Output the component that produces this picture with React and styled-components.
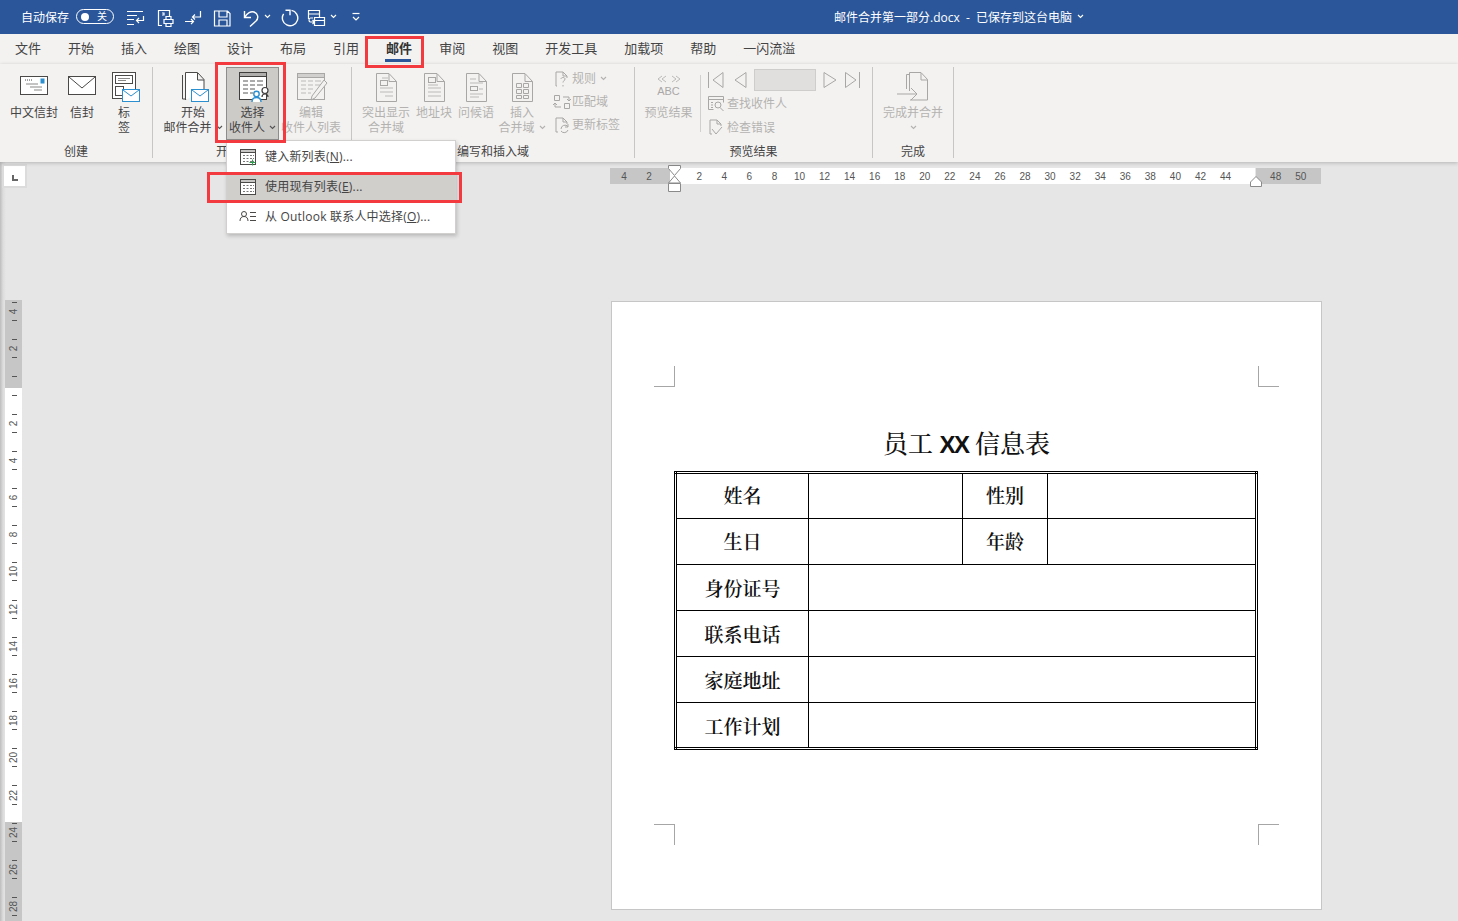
import React from 'react';
import styled, { createGlobalStyle } from 'styled-components';

const GlobalStyle = createGlobalStyle`
  html, body {
    margin: 0;
    padding: 0;
    background: #e6e6e6;
  }
  * {
    box-sizing: border-box;
  }
`;

const FONT = '"Open Sans", "Noto Sans CJK SC", "Liberation Sans", sans-serif';
const BLUE = '#2b579a';
const DIM = '#b4b2b0';
const ICON_DIM = '#a9a7a5';
const ICON_DARK = '#4a4948';
const MAIL = '#2b8fd0';

const Shell = styled.div`
  position: relative;
  width: 1458px;
  height: 921px;
  overflow: hidden;
  font-family: ${FONT};
  background: #e6e6e6;
`;

const TitleBar = styled.header`
  display: flex;
  align-items: center;
  height: 34px;
  padding: 0 0 1px 21px;
  background: ${BLUE};
  color: #fff;
  font-size: 12px;
  white-space: nowrap;
`;

const QuickArea = styled.div`
  display: flex;
  align-items: center;
  width: 813px;
`;

const Toggle = styled.div`
  display: flex;
  align-items: center;
  justify-content: space-between;
  width: 38px;
  height: 15px;
  margin: 0 9px 0 7px;
  padding: 0 6px 0 4px;
  border: 1px solid #fff;
  border-radius: 8px;
  font-size: 10px;
  line-height: 13px;
`;

const ToggleDot = styled.span`
  width: 8px;
  height: 8px;
  border-radius: 50%;
  background: #fff;
`;

const QuickButton = styled.span`
  display: flex;
  align-items: center;
  margin-left: ${p => p.$gap}px;
`;

const DocTitle = styled.div`
  display: flex;
  align-items: center;
  gap: 5px;
`;

const Tabs = styled.nav`
  display: flex;
  gap: 27px;
  height: 30px;
  padding-left: 15px;
  background: #f3f2f1;
  color: #444;
  font-size: 13px;
  line-height: 29px;
`;

const Tab = styled.span`
  position: relative;
  font-weight: ${p => (p.$active ? 700 : 400)};
  color: ${p => (p.$active ? '#333' : '#444')};

  &::after {
    content: '';
    display: ${p => (p.$active ? 'block' : 'none')};
    position: absolute;
    left: -1px;
    right: 1px;
    top: 25px;
    height: 3px;
    background: ${BLUE};
  }
`;

const Ribbon = styled.section`
  position: relative;
  z-index: 2;
  display: flex;
  height: 98px;
  padding: 3px 0 4px;
  background: #f3f2f1;
  box-shadow: 0 1px 4px rgba(0, 0, 0, 0.22);
  font-size: 12px;
  line-height: 15px;
  color: #444;
  white-space: nowrap;
`;

const Group = styled.div`
  display: flex;
  flex-direction: column;
  width: ${p => p.$width}px;
  border-right: 1px solid #c8c6c4;
`;

const GroupBody = styled.div`
  display: flex;
  height: 77px;
  padding-left: ${p => p.$pad || 0}px;
`;

const GroupLabel = styled.div`
  text-align: center;
  height: 14px;
  color: #444;
`;

const LargeButton = styled.div`
  position: relative;
  display: flex;
  flex-direction: column;
  align-items: center;
  flex: none;
  width: ${p => p.$width}px;
  height: 73px;
  color: ${p => (p.$off ? DIM : '#444')};
  background: ${p => (p.$open ? '#cdcbc8' : 'transparent')};
  border: ${p => (p.$open ? '1px solid #8f8d8b' : '0 none')};
  padding-top: ${p => (p.$open ? 1 : 2)}px;
`;

const IconSlot = styled.div`
  display: flex;
  justify-content: center;
  height: 34px;
  margin-bottom: 2px;
`;

const Line = styled.div`
  display: flex;
  align-items: center;
  gap: 4px;
  height: 15px;
`;

const SmallColumn = styled.div`
  display: flex;
  flex-direction: column;
  margin-left: ${p => p.$gap || 0}px;
`;

const SmallRow = styled.div`
  display: flex;
  align-items: center;
  gap: ${p => (p.$tight ? 1 : 2)}px;
  height: ${p => p.$height || 23}px;
  color: ${DIM};
`;

const ThinRule = styled.div`
  width: 1px;
  height: 57px;
  margin-top: 8px;
  background: #d2d0ce;
`;

const NavColumn = styled.div`
  display: flex;
  flex-direction: column;
  padding: 1px 0 0 6px;
`;

const NavRow = styled.div`
  display: flex;
  align-items: center;
  gap: 6px;
  height: 23px;
`;

const RecordBox = styled.div`
  width: 62px;
  height: 22px;
  background: #e1dfdd;
  border: 1px solid #cfcdcb;
`;

const Menu = styled.div`
  position: absolute;
  z-index: 5;
  top: 72px;
  left: -1px;
  width: 230px;
  padding: 1px 0;
  background: #fff;
  border: 1px solid #d2d0ce;
  box-shadow: 1px 2px 4px rgba(0, 0, 0, 0.2);
  color: #444;
  letter-spacing: 0.2px;
`;

const MenuItem = styled.div`
  display: flex;
  align-items: center;
  gap: 8px;
  height: 30px;
  padding: 0 0 1px 12px;
  background: ${p => (p.$hover ? '#d0cfcc' : 'transparent')};
`;

const Mnemonic = styled.span`
  text-decoration: underline;
`;

const Annotation = styled.div`
  position: absolute;
  z-index: 8;
  left: ${p => p.$x}px;
  top: ${p => p.$y}px;
  width: ${p => p.$w}px;
  height: ${p => p.$h}px;
  border: 3px solid #f33b3f;
  pointer-events: none;
`;

const Workspace = styled.main`
  height: 759px;
  padding-top: 4px;
  background: linear-gradient(to right, #bdbdbd 0, #dcdcdc 3px, #e6e6e6 6px);
`;

const RulerRow = styled.div`
  display: flex;
  height: 20px;
`;

const CornerTab = styled.div`
  flex: none;
  display: flex;
  align-items: center;
  justify-content: center;
  width: 21px;
  height: 20px;
  margin-left: 4px;
  background: #fff;
  box-shadow: 0 0 0 2px #dcdcdc;
`;

const CornerGlyph = styled.span`
  width: 6px;
  height: 6px;
  margin: 3px 0 0 0;
  border-left: 2px solid #666;
  border-bottom: 2px solid #666;
`;

const HRuler = styled.div`
  position: relative;
  display: flex;
  width: 711px;
  height: 16px;
  margin: 2px 0 0 585px;
  padding-left: 1.5px;
  background: linear-gradient(
    to right,
    #c6c6c6 60px,
    #fff 60px,
    #fff 645px,
    #e6e6e6 645px,
    #e6e6e6 646px,
    #c6c6c6 646px
  );
`;

const HTick = styled.span`
  flex: none;
  width: 25.07px;
  text-align: center;
  font-family: "Liberation Sans Narrow", "Liberation Sans", sans-serif;
  font-size: 10px;
  line-height: 17px;
  color: #555;
`;

const Marker = styled.svg`
  position: absolute;
  left: ${p => p.$x}px;
  top: ${p => p.$y}px;
`;

const MainRow = styled.div`
  display: flex;
  align-items: flex-start;
`;

const VRuler = styled.div`
  flex: none;
  width: 17px;
  height: 621px;
  margin: 114px 0 0 5px;
  overflow: hidden;
  background: linear-gradient(
    to bottom,
    #c6c6c6 88px,
    #fff 88px,
    #fff 522px,
    #c6c6c6 522px
  );
`;

const VCell = styled.div`
  display: flex;
  align-items: center;
  justify-content: center;
  height: 37.2px;
  margin-left: 1px;
  font-family: "Liberation Sans Narrow", "Liberation Sans", sans-serif;
  font-size: 10px;
  color: #555;
  background:
    linear-gradient(#555, #555) center 25% / 5px 1px no-repeat,
    linear-gradient(#555, #555) center 75% / 5px 1px no-repeat;

  &:first-child {
    margin-top: -7px;
  }
`;

const VLabel = styled.span`
  display: block;
  transform: rotate(-90deg);
`;

const Page = styled.article`
  flex: none;
  width: 711px;
  height: 609px;
  margin: 115px 0 0 589px;
  padding: 64px 42px 0;
  background: #fff;
  border: 1px solid #c6c6c6;
`;

const CropRow = styled.div`
  display: flex;
  justify-content: space-between;
  height: 21px;
`;

const CropMark = styled.span`
  width: 21px;
  height: 21px;
  border-style: solid;
  border-color: #a6a6a6;
  border-width: 0;
  border-top-width: ${p => (p.$v === 'bottom' ? 1 : 0)}px;
  border-bottom-width: ${p => (p.$v === 'top' ? 1 : 0)}px;
  border-left-width: ${p => (p.$h === 'right' ? 1 : 0)}px;
  border-right-width: ${p => (p.$h === 'left' ? 1 : 0)}px;
`;

const DocHeading = styled.h1`
  margin: 39px 0 13px;
  height: 32px;
  font-family: "Noto Serif CJK SC", "Noto Sans CJK SC", serif;
  font-size: 25px;
  line-height: 32px;
  font-weight: 500;
  text-align: center;
  color: #111;
`;

const HeadingLatin = styled.b`
  font-family: "Liberation Sans", sans-serif;
  font-size: 24px;
  letter-spacing: -1.5px;
  font-weight: 700;
`;

const InfoTable = styled.table`
  width: 584px;
  height: 277px;
  margin: 0 0 74px 20px;
  table-layout: fixed;
  border-collapse: collapse;
  border: 3px double #000;

  td {
    height: 46px;
    padding: 0;
    border: 1px solid #000;
    font-family: "Noto Serif CJK SC", "Noto Sans CJK SC", serif;
    font-size: 19px;
    font-weight: 600;
    text-align: center;
    color: #111;
  }

  tr:nth-child(-n + 2) td {
    padding-bottom: 3px;
  }
`;

const ChevronDown = ({ color = '#555', size = 7 }) => (
  <svg width={size} height="5" viewBox="0 0 7 5" fill="none" stroke={color} strokeWidth="1.1">
    <path d="M1 1l2.5 2.5L6 1" />
  </svg>
);

const QatSvg = ({ children, width = 20 }) => (
  <svg width={width} height="20" viewBox={`0 0 ${width} 20`} fill="none" stroke="#fff" strokeWidth="1.2">
    {children}
  </svg>
);

const Box36 = ({ children }) => (
  <svg width="36" height="34" viewBox="0 0 36 34" fill="none" strokeWidth="1">
    {children}
  </svg>
);

const MailBadge = ({ x, y, w = 18, h = 13 }) => (
  <g>
    <rect x={x + 0.5} y={y + 0.5} width={w - 1} height={h - 1} fill="#fff" stroke={MAIL} />
    <path d={`M${x + 1} ${y + 1}l${w / 2 - 1} ${h / 2 - 0.5}l${w / 2 - 1} ${-h / 2 + 0.5}`} stroke={MAIL} />
  </g>
);

const IconCnEnvelope = () => (
  <Box36>
    <rect x="4.5" y="7.5" width="27" height="18" fill="#fff" stroke={ICON_DARK} />
    <path d="M9 11h1M11 11h1M13 11h1M15 11h1" stroke={ICON_DARK} />
    <path d="M10 15h12M14 18h12M18 21h8" stroke="#8a8988" />
    <rect x="24.5" y="9.5" width="4" height="5" fill={MAIL} />
  </Box36>
);

const IconEnvelope = () => (
  <Box36>
    <rect x="4.5" y="7.5" width="27" height="18" fill="#fff" stroke={ICON_DARK} />
    <path d="M5 8l13 11L31 8" stroke={ICON_DARK} />
  </Box36>
);

const IconLabels = () => (
  <Box36>
    <rect x="6.5" y="3.5" width="23" height="26" fill="#fff" stroke={ICON_DARK} />
    <rect x="9.5" y="6.5" width="17" height="8" stroke={ICON_DARK} />
    <path d="M12 9.5h12M12 11.5h8" stroke="#8a8988" />
    <rect x="9.5" y="17.5" width="8" height="9" stroke={ICON_DARK} />
    <MailBadge x={16} y={20} />
  </Box36>
);

const IconStartMerge = () => (
  <Box36>
    <path d="M7.5 6v24h4" stroke={ICON_DARK} />
    <path d="M10.5 31V3.5h12l6.5 7V21M22.5 4v7h6.5" fill="#fff" stroke={ICON_DARK} />
    <MailBadge x={16} y={20} />
  </Box36>
);

const TableLines = ({ color }) => (
  <path d="M8 12h5M15 12h5M22 12h6M8 16h5M15 16h5M22 16h6M8 20h5M15 20h5M8 24h5M15 24h3" stroke={color} />
);

const IconSelect = () => (
  <Box36>
    <rect x="4.5" y="3.5" width="27" height="27" fill="#fff" stroke="#3f3e3d" />
    <rect x="4.5" y="3.5" width="27" height="4" fill="#b0aeac" stroke="#3f3e3d" />
    <TableLines color="#5a5958" />
    <circle cx="21.5" cy="25" r="2.7" fill="#fff" stroke={MAIL} strokeWidth="1.4" />
    <path d="M17 33c0-3 1.500-4.500 4.500-4.500s4.500 1.500 4.500 4.500" fill="#fff" stroke={MAIL} strokeWidth="1.4" />
    <circle cx="30" cy="21.5" r="3" fill="#fff" stroke="#3f3e3d" strokeWidth="1.2" />
    <path d="M27 28c0-2 1-3 3-3s3 1 3 3" stroke="#3f3e3d" strokeWidth="1.2" />
  </Box36>
);

const IconEdit = () => (
  <Box36>
    <rect x="4.5" y="4.5" width="27" height="26" stroke={ICON_DIM} />
    <rect x="4.5" y="4.5" width="27" height="4" fill="#d2d0ce" stroke={ICON_DIM} />
    <TableLines color="#bcbab8" />
    <path d="M31 11l3 3-12 15-4 2 1-4z" fill="#f3f2f1" stroke={ICON_DIM} />
  </Box36>
);

const PageOutline = () => (
  <path d="M8.5 32.500V4.500H21l7.500 8V32.500zM21 5v7.500h7.500" fill="#f3f2f1" stroke={ICON_DIM} />
);

const IconHighlight = () => (
  <Box36>
    <PageOutline />
    <rect x="12.5" y="11.5" width="7" height="5" stroke={ICON_DIM} />
    <path d="M14 9h6M12 19h13M12 23h13M17 27h8" stroke="#bcbab8" />
  </Box36>
);

const IconAddress = () => (
  <Box36>
    <PageOutline />
    <rect x="12.5" y="8.500" width="7" height="5" stroke={ICON_DIM} />
    <path d="M12 16h10M12 19h13M12 23h13M12 27h13" stroke="#bcbab8" />
  </Box36>
);

const IconGreeting = () => (
  <Box36>
    <PageOutline />
    <path d="M12 10h6M12 14h13" stroke="#bcbab8" />
    <rect x="12.5" y="17.500" width="7" height="4" stroke={ICON_DIM} />
    <path d="M21 20h4M12 25h13M12 28h9" stroke="#bcbab8" />
  </Box36>
);

const IconInsertField = () => (
  <Box36>
    <PageOutline />
    <path d="M12.500 14.500h5v4h-5zM19.500 14.500h5v4h-5zM12.500 20.500h5v4h-5zM19.500 20.500h5v4h-5zM12.500 26.500h5v3h-5zM19.500 26.500h5v3h-5z" stroke={ICON_DIM} />
  </Box36>
);

const IconPreview = () => (
  <Box36>
    <path d="M11 7L7 10l4 3M15 7l-4 3 4 3M21 7l4 3-4 3M25 7l4 3-4 3" stroke="#bcbab8" />
  </Box36>
);

const PreviewAbc = styled.span`
  position: absolute;
  top: 17px;
  left: 0;
  right: 0;
  text-align: center;
  font-size: 11px;
  line-height: 14px;
  font-family: "Liberation Sans", sans-serif;
  color: #aaa8a6;
`;

const IconFinish = () => (
  <Box36>
    <path d="M11.500 20V5.500h3" stroke={ICON_DIM} />
    <path d="M14.500 22V3.500H26l6.500 7V31H15M26 4v7h6.500" fill="#f3f2f1" stroke={ICON_DIM} />
    <path d="M2 25h20M16 19l6 6-6 6" stroke={ICON_DIM} />
  </Box36>
);

const Small = ({ children }) => (
  <svg width="18" height="18" viewBox="0 0 18 18" fill="none" stroke={ICON_DIM}>
    {children}
  </svg>
);

const NavSvg = ({ w, children }) => (
  <svg width={w} height="18" viewBox={`0 0 ${w} 18`} fill="none" stroke={ICON_DIM}>
    {children}
  </svg>
);

const MenuSvg = ({ children }) => (
  <svg width="18" height="18" viewBox="0 0 18 18" fill="none" stroke="#4a4948">
    {children}
  </svg>
);

const MenuGrid = () => (
  <>
    <rect x="1.500" y="1.500" width="15" height="15" fill="#fff" />
    <rect x="1.500" y="1.500" width="15" height="3" fill="#c8c6c4" />
    <path d="M4 7.500h2M7.500 7.500h2M11 7.500h2M14 7.500h1M4 10.500h2M7.500 10.500h2M11 10.500h2M14 10.500h1M4 13.500h2M7.500 13.500h2M11 13.500h2M14 13.500h1" stroke="#777" />
  </>
);

const hTicks = [4, 2, '', ...Array.from({ length: 22 }, (_, i) => (i + 1) * 2), '', 48, 50];
const vTicks = [4, 2, '', ...Array.from({ length: 14 }, (_, i) => (i + 1) * 2)];

export default function App() {
  return (
    <Shell>
      <GlobalStyle />
      <TitleBar>
        <QuickArea>
          自动保存
          <Toggle>
            <ToggleDot />
            关
          </Toggle>
          <QuickButton $gap={3}>
            <QatSvg>
              <path d="M1 4.500h16M1 8.500h10M1 12.500h7M1 17.500h7M17.500 9v4.500h-7M13 11l-2.500 2.500 2.500 2.500" />
            </QatSvg>
          </QuickButton>
          <QuickButton $gap={9}>
            <QatSvg>
              <path d="M7 18.500H3.500V3.500h11V9M7 6h2v2H7M9 12.500h9v4H9zM11 12V9.500h5V12M11 16.500v3h5v-3" />
            </QatSvg>
          </QuickButton>
          <QuickButton $gap={9}>
            <QatSvg>
              <path d="M16.500 4v6h-8M11 7.500L8.500 10 11 12.500M1 14.500h9M7 12l2.500 2.500L7 17" />
            </QatSvg>
          </QuickButton>
          <QuickButton $gap={9}>
            <QatSvg>
              <path d="M1.500 4h13l2.500 2.500V19H1.500zM6 4v6h8V4M6 19v-6h8v6" />
            </QatSvg>
          </QuickButton>
          <QuickButton $gap={9}>
            <QatSvg>
              <path d="M2.500 4v6.500H9M3 10C5 6 9 4 12 5c4 1.500 5 6 2 9l-6 5.500" strokeWidth="1.400" />
            </QatSvg>
          </QuickButton>
          <QuickButton $gap={2}>
            <ChevronDown color="#fff" />
          </QuickButton>
          <QuickButton $gap={9}>
            <QatSvg>
              <path d="M11.500 3.400A7.700 7.700 0 1 1 3.600 6.800" strokeWidth="1.400" />
              <path d="M5.500 3.200H10v5" strokeWidth="1.400" />
            </QatSvg>
          </QuickButton>
          <QuickButton $gap={7}>
            <QatSvg>
              <path d="M1.500 12V3.500h11V10M1.500 7h11M7.500 10.500h10v8h-10zM7.500 13.500h10M6 11H3.500c-2 0-2 4 0 4H7M5.500 13l2 2-2 2" />
            </QatSvg>
          </QuickButton>
          <QuickButton $gap={3}>
            <ChevronDown color="#fff" />
          </QuickButton>
          <QuickButton $gap={13}>
            <svg width="12" height="12" viewBox="0 0 12 12" fill="none" stroke="#fff" strokeWidth="1.200">
              <path d="M2.500 2.500h7" />
              <path d="M3 6l3 3 3-3" />
            </svg>
          </QuickButton>
        </QuickArea>
        <DocTitle>
          邮件合并第一部分.docx&nbsp;&nbsp;-&nbsp;&nbsp;已保存到这台电脑
          <ChevronDown color="#fff" />
        </DocTitle>
      </TitleBar>

      <Tabs>
        <Tab>文件</Tab>
        <Tab>开始</Tab>
        <Tab>插入</Tab>
        <Tab>绘图</Tab>
        <Tab>设计</Tab>
        <Tab>布局</Tab>
        <Tab>引用</Tab>
        <Tab $active>邮件</Tab>
        <Tab>审阅</Tab>
        <Tab>视图</Tab>
        <Tab>开发工具</Tab>
        <Tab>加载项</Tab>
        <Tab>帮助</Tab>
        <Tab>一闪流溢</Tab>
      </Tabs>

      <Ribbon>
        <Group $width={153}>
          <GroupBody $pad={8}>
            <LargeButton $width={52}>
              <IconSlot><IconCnEnvelope /></IconSlot>
              <Line>中文信封</Line>
            </LargeButton>
            <LargeButton $width={44}>
              <IconSlot><IconEnvelope /></IconSlot>
              <Line>信封</Line>
            </LargeButton>
            <LargeButton $width={40}>
              <IconSlot><IconLabels /></IconSlot>
              <Line>标</Line>
              <Line>签</Line>
            </LargeButton>
          </GroupBody>
          <GroupLabel>创建</GroupLabel>
        </Group>

        <Group $width={199}>
          <GroupBody $pad={7}>
            <LargeButton $width={66}>
              <IconSlot><IconStartMerge /></IconSlot>
              <Line>开始</Line>
              <Line>邮件合并<ChevronDown /></Line>
            </LargeButton>
            <LargeButton $width={53} $open>
              <IconSlot><IconSelect /></IconSlot>
              <Line>选择</Line>
              <Line>收件人<ChevronDown /></Line>
              <Menu>
                <MenuItem>
                  <MenuSvg>
                    <MenuGrid />
                    <path d="M13.500 11.500v6M10.500 14.500h6" stroke="#2e9e4f" />
                  </MenuSvg>
                  <span>键入新列表(<Mnemonic>N</Mnemonic>)...</span>
                </MenuItem>
                <MenuItem $hover>
                  <MenuSvg><MenuGrid /></MenuSvg>
                  <span>使用现有列表(<Mnemonic>E</Mnemonic>)...</span>
                </MenuItem>
                <MenuItem>
                  <MenuSvg>
                    <circle cx="5" cy="6" r="2.500" />
                    <path d="M1 13c0-3 1.500-4.500 4-4.500S9 10 9 13M11 4.500h6M11 8.500h6M11 12.500h6" />
                  </MenuSvg>
                  <span>从 Outlook 联系人中选择(<Mnemonic>O</Mnemonic>)...</span>
                </MenuItem>
              </Menu>
            </LargeButton>
            <LargeButton $width={64} $off>
              <IconSlot><IconEdit /></IconSlot>
              <Line>编辑</Line>
              <Line>收件人列表</Line>
            </LargeButton>
          </GroupBody>
          <GroupLabel>开始邮件合并</GroupLabel>
        </Group>

        <Group $width={283}>
          <GroupBody $pad={8}>
            <LargeButton $width={52} $off>
              <IconSlot><IconHighlight /></IconSlot>
              <Line>突出显示</Line>
              <Line>合并域</Line>
            </LargeButton>
            <LargeButton $width={44} $off>
              <IconSlot><IconAddress /></IconSlot>
              <Line>地址块</Line>
            </LargeButton>
            <LargeButton $width={40} $off>
              <IconSlot><IconGreeting /></IconSlot>
              <Line>问候语</Line>
            </LargeButton>
            <LargeButton $width={52} $off>
              <IconSlot><IconInsertField /></IconSlot>
              <Line>插入</Line>
              <Line>合并域<ChevronDown color={DIM} /></Line>
            </LargeButton>
            <SmallColumn $gap={5}>
              <SmallRow $tight>
                <Small>
                  <path d="M4 16H3V2h7l4 4v2M10 2v4h4" />
                  <path d="M8 9c0-2 4-2 4 0 0 1.500-2 2-2 3.500M10 15v1.500" />
                </Small>
                规则&nbsp;<ChevronDown color={DIM} />
              </SmallRow>
              <SmallRow $tight>
                <Small>
                  <path d="M1.500 2.500h5v5h-5zM11.500 10.500h5v5h-5zM10 4h6v4M14 6l2 2 2-2M8 14H2v-4M0 12l2-2 2 2" />
                </Small>
                匹配域
              </SmallRow>
              <SmallRow $tight>
                <Small>
                  <path d="M5 16H3V2h7l4 4v2M10 2v4h4" />
                  <path d="M8 13a4 4 0 0 1 7-2.500M15 8v3h-3M15 14a4 4 0 0 1-7 1" />
                </Small>
                更新标签
              </SmallRow>
            </SmallColumn>
          </GroupBody>
          <GroupLabel>编写和插入域</GroupLabel>
        </Group>

        <Group $width={238}>
          <GroupBody $pad={2}>
            <LargeButton $width={63} $off>
              <IconSlot><IconPreview /></IconSlot>
              <PreviewAbc>ABC</PreviewAbc>
              <Line>预览结果</Line>
            </LargeButton>
            <ThinRule />
            <NavColumn>
              <NavRow>
                <NavSvg w={20}>
                  <path d="M1.500 1v16M16 1.500L6 9l10 7.500z" />
                </NavSvg>
                <NavSvg w={15}>
                  <path d="M13 1.500L2 9l11 7.500z" />
                </NavSvg>
                <RecordBox />
                <NavSvg w={16}>
                  <path d="M2 1.500L14 9 2 16.500z" />
                </NavSvg>
                <NavSvg w={17}>
                  <path d="M1.500 1.500L12 9 1.500 16.500zM15.500 1v16" />
                </NavSvg>
              </NavRow>
              <SmallRow $height={24}>
                <Small>
                  <path d="M1.500 15.500V2.500h15v6M1.500 15.500h5M2 5.500h14" />
                  <path d="M4 8.500h2M4 11h2M4 13.500h2" />
                  <circle cx="11" cy="11" r="3" />
                  <path d="M13 13.500l3.500 3.500" />
                </Small>
                查找收件人
              </SmallRow>
              <SmallRow $height={24}>
                <Small>
                  <path d="M5 16H3V2h7l4 4v2M10 2v4h4M5 11l4 5 6-7" />
                </Small>
                检查错误
              </SmallRow>
            </NavColumn>
          </GroupBody>
          <GroupLabel>预览结果</GroupLabel>
        </Group>

        <Group $width={81}>
          <GroupBody>
            <LargeButton $width={80} $off>
              <IconSlot><IconFinish /></IconSlot>
              <Line>完成并合并</Line>
              <Line><ChevronDown color={DIM} /></Line>
            </LargeButton>
          </GroupBody>
          <GroupLabel>完成</GroupLabel>
        </Group>
      </Ribbon>

      <Workspace>
        <RulerRow>
          <CornerTab><CornerGlyph /></CornerTab>
          <HRuler>
            {hTicks.map((n, i) => (
              <HTick key={i}>{n}</HTick>
            ))}
            <Marker $x={58} $y={-3} width="13" height="28" viewBox="0 0 13 28" fill="#fff" stroke="#8a8a8a">
              <path d="M.5.500h12v3l-6 7-6-7z" />
              <path d="M6.500 11l6 7H.5z" />
              <path d="M.5 18.500h12v8H.5z" />
            </Marker>
            <Marker $x={640} $y={8} width="12" height="11" viewBox="0 0 12 11" fill="#fff" stroke="#8a8a8a">
              <path d="M6 .5l5.500 5.500v4.500H.5V6z" />
            </Marker>
          </HRuler>
        </RulerRow>
        <MainRow>
          <VRuler>
            {vTicks.map((n, i) => (
              <VCell key={i}><VLabel>{n}</VLabel></VCell>
            ))}
          </VRuler>
          <Page>
            <CropRow>
              <CropMark $v="top" $h="left" />
              <CropMark $v="top" $h="right" />
            </CropRow>
            <DocHeading>员工 <HeadingLatin>XX</HeadingLatin> 信息表</DocHeading>
            <InfoTable>
              <colgroup>
                <col width="133" />
                <col width="154" />
                <col width="85" />
                <col />
              </colgroup>
              <tbody>
                <tr>
                  <td>姓名</td>
                  <td></td>
                  <td>性别</td>
                  <td></td>
                </tr>
                <tr>
                  <td>生日</td>
                  <td></td>
                  <td>年龄</td>
                  <td></td>
                </tr>
                <tr>
                  <td>身份证号</td>
                  <td colSpan="3"></td>
                </tr>
                <tr>
                  <td>联系电话</td>
                  <td colSpan="3"></td>
                </tr>
                <tr>
                  <td>家庭地址</td>
                  <td colSpan="3"></td>
                </tr>
                <tr>
                  <td>工作计划</td>
                  <td colSpan="3"></td>
                </tr>
              </tbody>
            </InfoTable>
            <CropRow>
              <CropMark $v="bottom" $h="left" />
              <CropMark $v="bottom" $h="right" />
            </CropRow>
          </Page>
        </MainRow>
      </Workspace>

      <Annotation $x={365} $y={36} $w={59} $h={32} />
      <Annotation $x={215} $y={62} $w={71} $h={81} />
      <Annotation $x={207} $y={172} $w={255} $h={31} />
    </Shell>
  );
}
